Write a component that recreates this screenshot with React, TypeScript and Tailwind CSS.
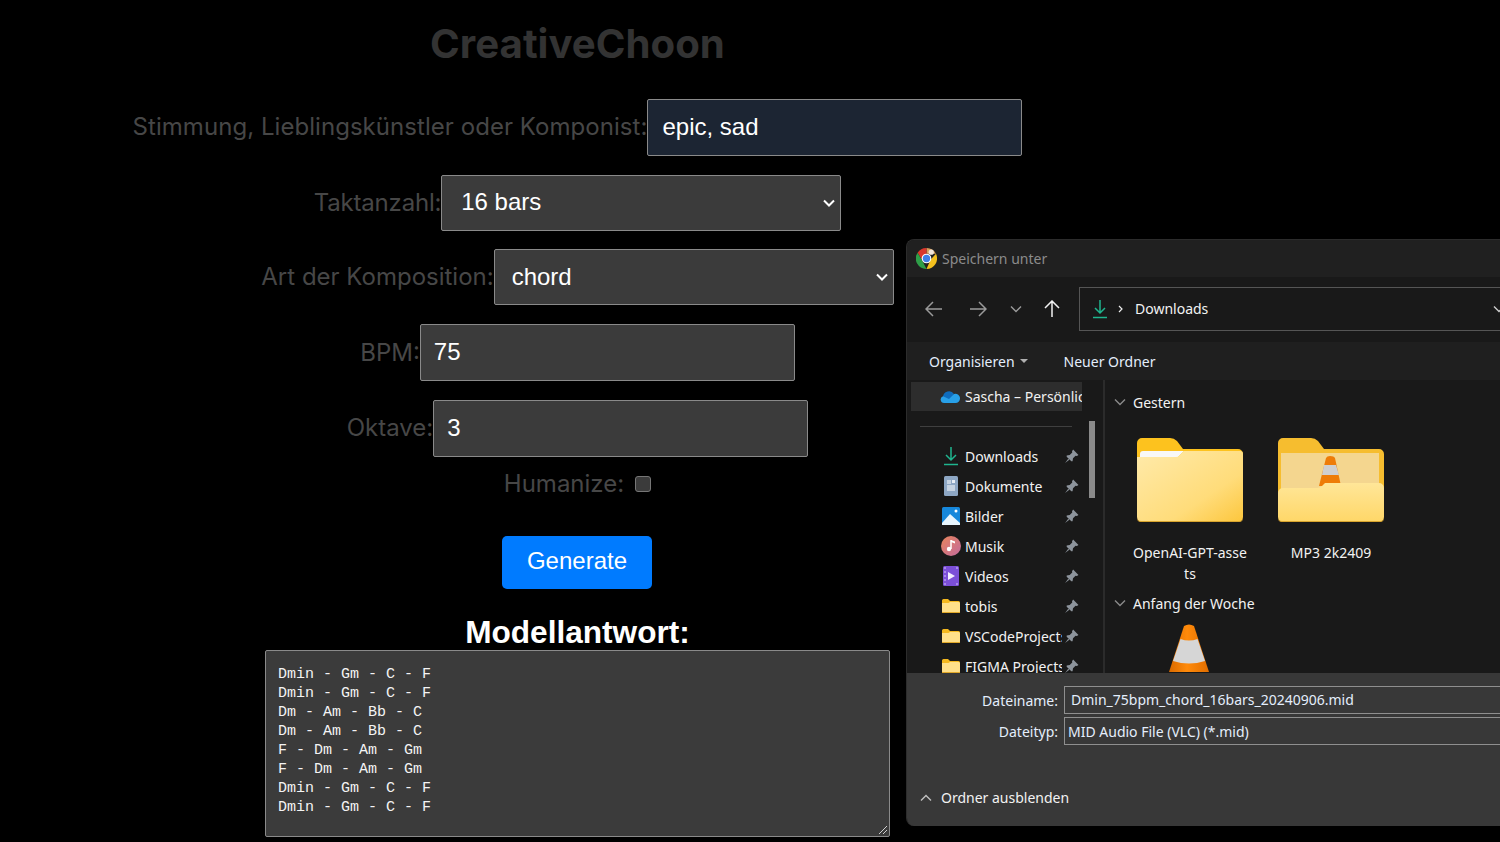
import React from "react";

const inter = "font-['Inter',sans-serif]";
const arial = "font-['Liberation_Sans',sans-serif]";
const field = `${arial} h-full w-full bg-[#3b3b3b] border border-[#8a8a8a] rounded-[2px] text-white text-[24px]`;
const chords = `Dmin - Gm - C - F
Dmin - Gm - C - F
Dm - Am - Bb - C
Dm - Am - Bb - C
F - Dm - Am - Gm
F - Dm - Am - Gm
Dmin - Gm - C - F
Dmin - Gm - C - F`;

function Label({ children, className = "" }: { children: React.ReactNode; className?: string }) {
  return <label className={`${inter} text-[24px] leading-[29px] text-[#474747] ${className}`}>{children}</label>;
}

function Select({ value, className }: { value: string; className: string }) {
  return (
    <div className="relative w-[400px] h-full">
      <select defaultValue={value} className={`${field} appearance-none outline-none ${className}`}>
        <option>{value}</option>
      </select>
      <svg viewBox="0 0 12 8" className="absolute right-[6px] top-[24px] w-[12px] h-[8px]" fill="none" stroke="#ffffff" strokeWidth="2">
        <path d="M1 1.500l5 5 5-5" />
      </svg>
    </div>
  );
}

function Folder({ className }: { className: string }) {
  return (
    <svg viewBox="0 0 106 84" className={className}>
      <defs>
        <linearGradient id="fg" x1="0" y1="0" x2="1" y2="1">
          <stop offset="0" stopColor="#ffeaaa" />
          <stop offset="0.65" stopColor="#ffdc7a" />
          <stop offset="1" stopColor="#fcc63c" />
        </linearGradient>
      </defs>
      <path d="M0 5a5 5 0 0 1 5-5h28q4 0 7 3l6 8h55a5 5 0 0 1 5 5v30H0z" fill="#fdc21e" />
      <path d="M3 16q0-3 3-3h41l-6 6H3z" fill="#f8f8f8" />
      <path d="M0 19h39q2 0 3-1l5-5h56a3 3 0 0 1 3 3v63a5 5 0 0 1-5 5H5a5 5 0 0 1-5-5z" fill="url(#fg)" />
      <path d="M0 79a4 4 0 0 0 4 4h98a4 4 0 0 0 4-4v1a4 4 0 0 1-4 4H4a4 4 0 0 1-4-4z" fill="#d9a52e" />
    </svg>
  );
}

function FolderMusic({ className }: { className: string }) {
  return (
    <svg viewBox="0 0 106 84" className={className}>
      <defs>
        <linearGradient id="fm" x1="0" y1="0" x2="0" y2="1">
          <stop offset="0" stopColor="#ffe698" />
          <stop offset="1" stopColor="#ffd768" />
        </linearGradient>
      </defs>
      <path d="M0 5a5 5 0 0 1 5-5h28q4 0 7 3l6 8h55a5 5 0 0 1 5 5v40H0z" fill="#f6bd2f" />
      <rect x="3" y="15" width="98" height="40" fill="#f4d68f" />
      <path d="M41 48l7-28q1-2 4-2 4 0 5 2l6 28z" fill="#ee7c08" />
      <path d="M46 27h12l3 10H44z" fill="#cfcfcf" />
      <path d="M0 55a5 5 0 0 1 5-5h34q3 0 5-2l3-3h54a5 5 0 0 1 5 5v29a5 5 0 0 1-5 5H5a5 5 0 0 1-5-5z" fill="url(#fm)" />
      <path d="M0 79a4 4 0 0 0 4 4h98a4 4 0 0 0 4-4v1a4 4 0 0 1-4 4H4a4 4 0 0 1-4-4z" fill="#d9a52e" />
    </svg>
  );
}

function Cone({ className }: { className: string }) {
  return (
    <svg viewBox="0 0 40 48" className={className}>
      <defs>
        <linearGradient id="cg" x1="0" y1="0" x2="1" y2="0">
          <stop offset="0" stopColor="#d96a00" />
          <stop offset="0.45" stopColor="#ff8a0a" />
          <stop offset="1" stopColor="#e06d00" />
        </linearGradient>
      </defs>
      <path d="M15 2q5-3 10 0l15 46H0z" fill="url(#cg)" />
      <path d="M11.500 15q8.500 3 17 0l7.500 22q-16 5-32 0z" fill="#d6d6d6" />
    </svg>
  );
}

function SmallFolder() {
  return (
    <svg viewBox="0 0 18 14" className="w-[18px] h-[14px]">
      <path d="M0 1.500A1.500 1.500 0 0 1 1.500 0H6l2 2h8.500A1.500 1.500 0 0 1 18 3.500V6H0z" fill="#f4b81f" />
      <path d="M0 4h6.500L8 3h8.500A1.500 1.500 0 0 1 18 4.500V12.500A1.500 1.500 0 0 1 16.500 14H1.500A1.500 1.500 0 0 1 0 12.500z" fill="#ffe08a" />
      <rect y="13" width="18" height="1" fill="#e2a92a" />
    </svg>
  );
}

function DownloadIcon() {
  return (
    <svg viewBox="0 0 16 20" className="w-[16px] h-[20px]" fill="none" stroke="#1fb58f" strokeWidth="1.500">
      <path d="M8 1v13M3 9l5 5 5-5" />
      <path d="M1 18.500h14" />
    </svg>
  );
}

function Pin() {
  return (
    <svg viewBox="0 0 14 14" className="w-[15px] h-[15px]" fill="#8d949c">
      <path d="M8.500 0.500L13.500 5.500 12 6.500 10.800 6.300 8.400 8.700 8 11.500 6.800 11.500 2.500 7.200 2.500 6 5.300 5.600 7.700 3.200 7.500 2z" />
      <path d="M4 9L1 13 5 10z" />
    </svg>
  );
}

function Arrow({ dir, color }: { dir: "left" | "right" | "up"; color: string }) {
  const d = {
    left: "M17 9H1M8 2L1 9l7 7",
    right: "M1 9h16M10 2l7 7-7 7",
    up: "M9 17V1M2 8l7-7 7 7",
  }[dir];
  return (
    <svg viewBox="0 0 18 18" className="w-[18px] h-[18px]" fill="none" stroke={color} strokeWidth="1.500">
      <path d={d} />
    </svg>
  );
}

function Chevron({ up = false, color = "#8a8a8a", size = 12 }: { up?: boolean; color?: string; size?: number }) {
  return (
    <svg viewBox="0 0 12 12" width={size} height={size} fill="none" stroke={color} strokeWidth="1.400">
      <path d={up ? "M1 8.500L6 3.500l5 5" : "M1 3.500l5 5 5-5"} />
    </svg>
  );
}

const quick: { name: string; icon: React.ReactNode }[] = [
  { name: "Downloads", icon: <DownloadIcon /> },
  {
    name: "Dokumente",
    icon: (
      <svg viewBox="0 0 14 20" className="w-[14px] h-[20px]">
        <rect width="14" height="20" rx="1.500" fill="#8ea7c4" />
        <path d="M3 5h4M3 7h4M3 10h8M3 12h8M3 14h8" stroke="#fff" strokeWidth="1" />
        <rect x="8" y="4" width="3" height="3" fill="#e8eef5" />
      </svg>
    ),
  },
  {
    name: "Bilder",
    icon: (
      <svg viewBox="0 0 18 18" className="w-[18px] h-[18px]">
        <rect width="18" height="18" rx="1.500" fill="#1688dc" />
        <path d="M0 16l8-9 10 9v2H0z" fill="#e8f5fd" />
        <circle cx="14" cy="4" r="1.500" fill="#fff" />
      </svg>
    ),
  },
  {
    name: "Musik",
    icon: (
      <svg viewBox="0 0 20 20" className="w-[20px] h-[20px]">
        <defs>
          <linearGradient id="mg" x1="0" y1="0" x2="1" y2="1">
            <stop offset="0" stopColor="#e8855a" />
            <stop offset="1" stopColor="#c36a9e" />
          </linearGradient>
        </defs>
        <circle cx="10" cy="10" r="10" fill="url(#mg)" />
        <path d="M10 4v9" stroke="#fff" strokeWidth="1.500" />
        <path d="M10 4l4 1.500v2L10 6z" fill="#fff" />
        <circle cx="8" cy="13" r="2.200" fill="#fff" />
      </svg>
    ),
  },
  {
    name: "Videos",
    icon: (
      <svg viewBox="0 0 16 20" className="w-[16px] h-[20px]">
        <rect width="16" height="20" rx="1.500" fill="#7c4fd8" />
        <path d="M5 6l7 4-7 4z" fill="#f3edff" />
        <path d="M1 2h2M1 6h2M1 10h2M1 14h2M1 18h2M13 2h2M13 18h2" stroke="#d4c3f7" strokeWidth="1.200" />
      </svg>
    ),
  },
  { name: "tobis", icon: <SmallFolder /> },
  { name: "VSCodeProjects", icon: <SmallFolder /> },
  { name: "FIGMA Projects", icon: <SmallFolder /> },
];

function SaveDialog() {
  return (
    <div className="absolute left-[906px] top-[239px] w-[640px] h-[587px] rounded-[8px] overflow-hidden flex flex-col bg-[#191919] border-l border-t border-[#2c2c2c] font-['Noto_Sans',sans-serif] text-[14px] text-[#f2f2f2]">
      <div className="h-[37px] shrink-0 bg-[#202020] flex items-center pl-[9px] gap-[5px]">
        <svg viewBox="0 0 20 20" className="w-[21px] h-[21px]">
          <path d="M10 0a10 10 0 0 1 9 5.500H10z" fill="#d8a05a" />
          <path d="M1.500 4.500A10 10 0 0 1 10 0v5.500L5.500 11z" fill="#d9372c" />
          <path d="M1.500 4.500L6.500 13l3.500 7A10 10 0 0 1 1.500 4.500z" fill="#2e9e48" />
          <path d="M19 5.500A10 10 0 0 1 10 20l4-9z" fill="#f3c01e" />
          <circle cx="10" cy="10" r="4.600" fill="#fff" />
          <circle cx="10" cy="10" r="3.500" fill="#3f7fe8" />
          <circle cx="14.500" cy="4" r="2.500" fill="#f0e6dc" />
        </svg>
        <span className="text-[14px] text-[#8b8b8b]">Speichern unter</span>
      </div>
      <div className="h-[65px] pb-[1px] shrink-0 bg-[#191919] flex items-center">
        <div className="w-[172px] shrink-0 flex items-center pl-[18px]">
          <Arrow dir="left" color="#9a9a9a" />
          <span className="ml-[26px]"><Arrow dir="right" color="#9a9a9a" /></span>
          <span className="ml-[23px]"><Chevron color="#9a9a9a" /></span>
          <span className="ml-[21px]"><Arrow dir="up" color="#f2f2f2" /></span>
        </div>
        <div className="flex-1 h-[44px] border border-[#555555] flex items-center pl-[12px]">
          <DownloadIcon />
          <svg viewBox="0 0 8 8" className="w-[8px] h-[8px] ml-[9px]" fill="none" stroke="#eee" strokeWidth="1.200"><path d="M2 1l3 3-3 3" /></svg>
          <span className="ml-[10px] pb-[2px]">Downloads</span>
          <span className="absolute left-[586px]"><Chevron color="#cccccc" /></span>
        </div>
      </div>
      <div className="h-[38px] shrink-0 bg-[#1f1f1f] flex items-center pl-[22px]">
        <span className="text-[#e4eefc]">Organisieren</span>
        <span className="ml-[5px] w-0 h-0 border-l-[4px] border-r-[4px] border-t-[4px] border-l-transparent border-r-transparent border-t-[#b0b0b0]" />
        <span className="ml-[36px] text-[#e4eefc]">Neuer Ordner</span>
      </div>
      <div className="flex-1 min-h-0 flex overflow-hidden">
        <div className="w-[198px] shrink-0 flex border-r-2 border-[#2b2b2b]">
          <div className="w-[175px] pl-[4px] pt-[2px] shrink-0 overflow-hidden">
            <div className="h-[29px] bg-[#2d2d2d] flex items-center pl-[29px] gap-[5px] whitespace-nowrap overflow-hidden">
              <svg viewBox="0 0 20 13" className="w-[20px] h-[13px] shrink-0">
                <path d="M3 7a6 6 0 0 1 11-3l-5 7H3z" fill="#0f6cbd" />
                <path d="M4 13a3.500 3.500 0 0 1-1-6.800L9 9l5-5a4.500 4.500 0 0 1 6 4.500A4.500 4.500 0 0 1 15.500 13z" fill="#28a0e8" />
              </svg>
              <span>Sascha – Persönlich</span>
            </div>
            <div className="h-px bg-[#3f3f3f] ml-[9px] mr-[10px] mt-[15px] mb-[14px]" />
            {quick.map((q) => (
              <div key={q.name} className="h-[30px] flex items-center relative">
                <span className="w-[54px] shrink-0 flex justify-center pl-[26px]">{q.icon}</span>
                <span className="w-[97px] overflow-hidden whitespace-nowrap">{q.name}</span>
                <span className="mr-[3px] absolute right-0"><Pin /></span>
              </div>
            ))}
          </div>
          <div className="ml-[7px] mt-[41px] w-[6px] h-[77px] bg-[#8a8a8a]" />
        </div>
        <div className="flex-1 pl-[9px] pt-[13px]">
          <div className="flex items-center gap-[7px] h-[18px]"><Chevron /><span>Gestern</span></div>
          <div className="flex mt-[27px] ml-[23px]">
            <div className="w-[141px] flex flex-col">
              <div className="w-[106px]"><Folder className="w-[106px] h-[84px]" /></div>
              <div className="w-[116px] -ml-[5px] mt-[20px] text-center leading-[21px] break-all">OpenAI-GPT-assets</div>
            </div>
            <div className="w-[106px] flex flex-col">
              <FolderMusic className="w-[106px] h-[84px]" />
              <div className="mt-[20px] text-center leading-[21px] whitespace-nowrap">MP3 2k2409</div>
            </div>
          </div>
          <div className="flex items-center gap-[7px] h-[18px] mt-[10px]"><Chevron /><span>Anfang der Woche</span></div>
          <div className="ml-[55px] mt-[12px]"><Cone className="w-[40px] h-[48px]" /></div>
        </div>
      </div>
      <div className="h-[153px] shrink-0 bg-[#383838] relative">
        <div className="flex items-center h-[28px] mt-[13px]">
          <span className="w-[151px] text-right text-[#e4eefc]">Dateiname:</span>
          <div className="ml-[6px] flex-1 h-full border border-[#8f8f8f] pl-[6px] pb-[2px] flex items-center text-[#e4eefc]">Dmin_75bpm_chord_16bars_20240906.mid</div>
        </div>
        <div className="flex items-center h-[28px] mt-[3px]">
          <span className="w-[151px] text-right text-[#e4eefc]">Dateityp:</span>
          <div className="ml-[6px] flex-1 h-full border border-[#8f8f8f] pl-[3px] flex items-center text-[#e4eefc]">MID Audio File (VLC) (*.mid)</div>
        </div>
        <div className="flex items-center mt-[42px] pl-[13px] gap-[9px]">
          <Chevron up color="#c0c0c0" />
          <span>Ordner ausblenden</span>
        </div>
      </div>
    </div>
  );
}

export default function App() {
  return (
    <div className="relative w-[1500px] h-[842px] overflow-hidden bg-black">
      <div className="w-[1155px] flex flex-col items-center">
        <h1 className={`${inter} text-[40.2px] leading-[48px] font-bold text-[#333333] mt-[20px]`}>CreativeChoon</h1>
        <div className="flex items-center mt-[31px] h-[57px]">
          <Label className="pb-[2px] tracking-[0.05px]">Stimmung, Lieblingskünstler oder Komponist:</Label>
          <input readOnly value="epic, sad" className={`${arial} w-[375px] h-full bg-[#1c2533] border border-[#8a8a8a] rounded-[2px] text-white text-[24px] pl-[14px] pb-[2px] outline-none`} />
        </div>
        <div className="flex items-center mt-[19px] h-[56px]">
          <Label className="pb-[2px] tracking-[-0.2px]">Taktanzahl:</Label>
          <Select value="16 bars" className="pl-[19px] pb-[2px]" />
        </div>
        <div className="flex items-center mt-[18px] h-[56px]">
          <Label className="pb-[2px]">Art der Komposition:</Label>
          <Select value="chord" className="pl-[17px]" />
        </div>
        <div className="flex items-center mt-[19px] h-[57px]">
          <Label>BPM:</Label>
          <div className="w-[375px] h-full"><input readOnly value="75" className={`${field} pl-[13px] pb-[2px] outline-none`} /></div>
        </div>
        <div className="flex items-center mt-[19px] h-[57px]">
          <Label className="pb-[2px]">Oktave:</Label>
          <div className="w-[375px] h-full"><input readOnly value="3" className={`${field} pl-[13px] pb-[2px] outline-none`} /></div>
        </div>
        <div className="flex items-center mt-[12px] h-[29px] gap-[11px]">
          <Label>Humanize:</Label>
          <input type="checkbox" className="appearance-none w-[16px] h-[16px] rounded-[3px] bg-[#3b3b3b] border border-[#767676]" />
        </div>
        <button className={`${arial} mt-[38px] -ml-[1px] pb-[3px] w-[150px] h-[53px] rounded-[5px] bg-[#007bff] text-white text-[24px]`}>Generate</button>
        <h2 className={`${arial} font-bold text-[31.6px] leading-[37px] text-white mt-[25px]`}>Modellantwort:</h2>
        <div className="relative w-[625px] h-[187px] -mt-[1px]">
          <textarea
            readOnly
            defaultValue={chords}
            className="block w-full h-full resize-none bg-[#3b3b3b] border border-[#8a8a8a] rounded-[2px] text-[#f4f4f4] font-['Liberation_Mono',monospace] text-[15px] leading-[19px] px-[12px] pt-[14px] pb-[10px] outline-none"
          />
          <svg viewBox="0 0 10 10" className="absolute right-[2px] bottom-[2px] w-[10px] h-[10px]" fill="none" stroke="#d0d0d0" strokeWidth="1">
            <path d="M1 9l8-8M5 9l4-4" />
          </svg>
        </div>
      </div>
      <SaveDialog />
    </div>
  );
}
